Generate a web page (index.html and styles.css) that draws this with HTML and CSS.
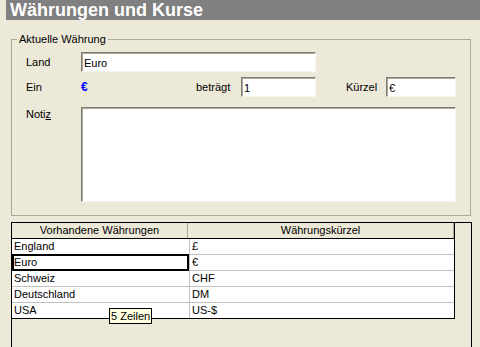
FILE: index.html
```html
<!DOCTYPE html>
<html lang="de">
<head>
  <meta charset="UTF-8">
  <title>Währungen und Kurse</title>
  <link rel="stylesheet" href="styles.css">
</head>
<body>
  <div class="titlebar">Währungen und Kurse</div>

  <fieldset class="group">
    <legend>Aktuelle Währung</legend>
    <div class="row">
      <label class="lbl" for="land">Land</label>
      <input class="field w-land" id="land" type="text" value="Euro">
    </div>
    <div class="row">
      <span class="lbl">Ein</span>
      <span class="euro">€</span>
      <label class="lbl-mid" for="betrag">beträgt</label>
      <input class="field w-betrag" id="betrag" type="text" value="1">
      <label class="lbl-kz" for="kuerzel">Kürzel</label>
      <input class="field w-kz" id="kuerzel" type="text" value="€">
    </div>
    <div class="row row-notiz">
      <label class="lbl lbl-top" for="notiz">Noti<u>z</u></label>
      <textarea class="field notiz" id="notiz"></textarea>
    </div>
  </fieldset>

  <div class="tableframe">
    <div class="grid">
      <div class="grow head">
        <div class="hcell c1">Vorhandene Währungen</div>
        <div class="hcell c2">Währungskürzel</div>
      </div>
      <div class="grow">
        <div class="cell c1">England</div>
        <div class="cell c2">£</div>
      </div>
      <div class="grow">
        <div class="cell c1 selected">Euro</div>
        <div class="cell c2">€</div>
      </div>
      <div class="grow">
        <div class="cell c1">Schweiz</div>
        <div class="cell c2">CHF</div>
      </div>
      <div class="grow">
        <div class="cell c1">Deutschland</div>
        <div class="cell c2">DM</div>
      </div>
      <div class="grow last">
        <div class="cell c1">USA</div>
        <div class="cell c2">US-$</div>
      </div>
    </div>
    <div class="tooltip">5 Zeilen</div>
  </div>
</body>
</html>
```

FILE: styles.css
```css
body {
  margin: 0;
  background: #ece9d8;
  font-family: "Liberation Sans", Arial, sans-serif;
  font-size: 11px;
  color: #000;
  overflow: hidden;
}
.titlebar {
  margin-left: 6px;
  height: 20px;
  line-height: 20px;
  padding-left: 4px;
  background: #808080;
  color: #fff;
  font-size: 18px;
  font-weight: bold;
}
.group {
  margin: 12px 9px 0 11px;
  padding: 6px 0 13px 14px;
  border: 1px solid #aca899;
  min-width: 0;
}
.group legend {
  margin-left: -9px;
  padding: 0 2px;
  line-height: 14px;
}
.row {
  display: flex;
  align-items: center;
  height: 20px;
  margin-bottom: 5px;
}
.row-notiz {
  height: auto;
  align-items: flex-start;
  margin: 10px 0 0 0;
}
.lbl {
  width: 55px;
}
.lbl-top {
  padding-top: 1px;
}
.euro {
  width: 115px;
  color: #0000ff;
  font-weight: bold;
  font-size: 12px;
}
.lbl-mid {
  width: 45px;
}
.lbl-kz {
  width: 40px;
  margin-left: 30px;
}
.field {
  box-sizing: border-box;
  height: 20px;
  margin: 0;
  padding: 1px 2px 0 2px;
  font-family: inherit;
  font-size: 11px;
  color: #000;
  background: #fff;
  border: 1px solid;
  border-color: #7f7d72 #f6f5ee #f6f5ee #7f7d72;
  box-shadow: inset 1px 1px 0 #aca899;
  outline: none;
}
.w-land { width: 235px; }
.w-betrag { width: 75px; }
.w-kz { width: 70px; }
.notiz {
  width: 375px;
  height: 95px;
  resize: none;
}
.tableframe {
  position: relative;
  margin: 6px 8px 0 11px;
  height: 140px;
  border: 1px solid #000;
  border-bottom: none;
}
.grid {
  width: 442px;
  border-right: 1px solid #000;
}
.grow {
  display: flex;
  height: 16px;
  background: #fff;
  border-bottom: 1px solid #c0c0c0;
  box-sizing: border-box;
}
.grow.head {
  height: 16px;
  background: #ece9d8;
  border-bottom: 1px solid #000;
}
.grow.last {
  border-bottom-color: #000;
}
.c1 {
  width: 175px;
  border-right: 1px solid #c0c0c0;
}
.c2 {
  flex: 1;
}
.hcell {
  text-align: center;
  line-height: 14px;
  border-right: 1px solid #aca899;
}
.cell {
  padding-left: 2px;
  line-height: 15px;
  white-space: nowrap;
}
.selected {
  box-shadow: inset 0 0 0 2px #000;
  margin-top: -1px;
  height: 17px;
  line-height: 17px;
  position: relative;
}
.tooltip {
  position: absolute;
  left: 97px;
  top: 85px;
  padding: 0 1px;
  line-height: 14px;
  background: #ffffe1;
  border: 1px solid #000;
  font-size: 11px;
}
```
